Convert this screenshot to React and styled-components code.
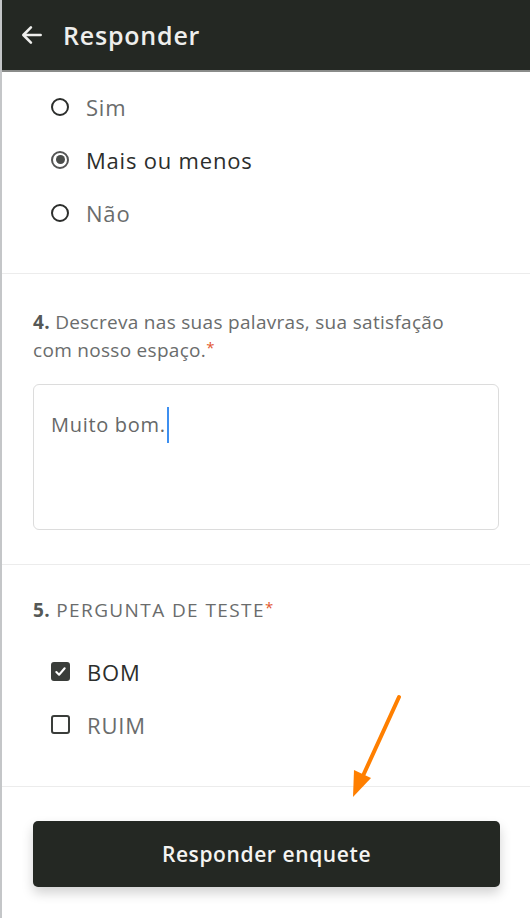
import React, { useState } from "react";
import styled, { createGlobalStyle } from "styled-components";

const GlobalStyle = createGlobalStyle`
  html, body {
    margin: 0;
    padding: 0;
    background: #fff;
  }
  body {
    font-family: "Open Sans", Lato, sans-serif;
    -webkit-font-smoothing: antialiased;
  }
`;

const Page = styled.div`
  position: relative;
  width: 530px;
  height: 918px;
  overflow: hidden;
  border-left: 2px solid #c4c6c8;
  box-sizing: border-box;
  background: #fff;
`;

const Header = styled.header`
  height: 72px;
  background: #242823;
  border-bottom: 2px solid #8a8c8a;
  display: flex;
  align-items: center;
  padding-left: 17px;
  gap: 18px;
  box-sizing: border-box;
`;

const Title = styled.h1`
  margin: 0;
  color: #eeeeec;
  font-size: 25px;
  font-weight: 600;
  letter-spacing: 0.8px;
`;

const Section = styled.section`
  padding: ${(p) => p.$pad || "0 31px"};
  border-bottom: 1px solid #ececec;
`;

const OptionList = styled.div`
  display: flex;
  flex-direction: column;
  margin-top: ${(p) => p.$top || "0"};
`;

const Option = styled.label`
  display: flex;
  align-items: center;
  gap: 17px;
  height: 53px;
  padding-left: 18px;
  font-size: 22px;
  letter-spacing: 0.8px;
  color: ${(p) => (p.$active ? "#2c2e2c" : "#6a6c6c")};
  cursor: pointer;
`;

const Radio = styled.span`
  width: 18px;
  height: 18px;
  border-radius: 50%;
  border: 2px solid ${(p) => (p.$on ? "#555" : "#2c2e2c")};
  box-sizing: border-box;
  display: flex;
  align-items: center;
  justify-content: center;
  flex-shrink: 0;
  &::after {
    content: "";
    display: ${(p) => (p.$on ? "block" : "none")};
    width: 9px;
    height: 9px;
    border-radius: 50%;
    background: #4a4c4a;
  }
`;

const Check = styled.span`
  width: 19px;
  height: 19px;
  border-radius: 3px;
  box-sizing: border-box;
  border: 2px solid #3a3d3a;
  background: ${(p) => (p.$on ? "#3a3d3a" : "#fff")};
  display: flex;
  align-items: center;
  justify-content: center;
  flex-shrink: 0;
`;

const Question = styled.p`
  margin: 0;
  max-width: 440px;
  font-size: 19px;
  line-height: 28px;
  letter-spacing: ${(p) => (p.$caps ? "1.4px" : "0.3px")};
  color: #6a6c6c;
  b {
    color: #555856;
    font-weight: 700;
    letter-spacing: 0.3px;
  }
`;

const Req = styled.span`
  color: #e2572f;
  font-size: 15px;
  vertical-align: top;
  line-height: 22px;
  letter-spacing: 0;
`;

const TextBox = styled.div`
  margin-top: 20px;
  height: 146px;
  border: 1px solid #dcdcdc;
  border-radius: 6px;
  box-sizing: border-box;
  padding: 26px 17px;
  font-size: 20px;
  letter-spacing: 0.7px;
  color: #666868;
  display: flex;
  align-items: flex-start;
`;

const Caret = styled.span`
  display: inline-block;
  width: 2px;
  height: 36px;
  margin-top: -4px;
  margin-left: 1px;
  background: #3d8ff0;
`;

const Footer = styled.div`
  padding: 34px 30px 0 31px;
`;

const SubmitButton = styled.button`
  width: 467px;
  height: 66px;
  border: none;
  border-radius: 5px;
  background: #242823;
  color: #f4f4f2;
  font-family: inherit;
  font-size: 21px;
  font-weight: 600;
  letter-spacing: 0.6px;
  box-shadow: 0 6px 12px rgba(0, 0, 0, 0.18);
  cursor: pointer;
`;

const Annotation = styled.svg`
  position: absolute;
  left: 340px;
  top: 690px;
  pointer-events: none;
`;

const BackArrow = () => (
  <svg width="26" height="26" viewBox="0 0 24 24" fill="none" stroke="#eeeeec" strokeWidth="2.4" strokeLinecap="round" strokeLinejoin="round">
    <path d="M20 12H5" />
    <path d="M11 5l-7 7 7 7" />
  </svg>
);

const Tick = () => (
  <svg width="13" height="13" viewBox="0 0 14 14" fill="none" stroke="#fff" strokeWidth="2.2" strokeLinecap="round" strokeLinejoin="round">
    <path d="M2.5 7.5l3 3 6-7" />
  </svg>
);

export default function App() {
  const [choice, setChoice] = useState("Mais ou menos");
  const [checks, setChecks] = useState({ BOM: true, RUIM: false });

  return (
    <Page>
      <GlobalStyle />
      <Header>
        <BackArrow />
        <Title>Responder</Title>
      </Header>

      <Section $pad="8px 31px 34px">
        <OptionList>
          {["Sim", "Mais ou menos", "Não"].map((o) => (
            <Option key={o} $active={choice === o} onClick={() => setChoice(o)}>
              <Radio $on={choice === o} />
              {o}
            </Option>
          ))}
        </OptionList>
      </Section>

      <Section $pad="34px 31px 34px">
        <Question>
          <b>4.</b> Descreva nas suas palavras, sua satisfação com nosso espaço.
          <Req>*</Req>
        </Question>
        <TextBox>
          Muito bom.
          <Caret />
        </TextBox>
      </Section>

      <Section $pad="31px 31px 35px">
        <Question $caps>
          <b>5.</b> PERGUNTA DE TESTE<Req>*</Req>
        </Question>
        <OptionList $top="21px">
          {["BOM", "RUIM"].map((o) => (
            <Option
              key={o}
              $active={checks[o]}
              onClick={() => setChecks({ ...checks, [o]: !checks[o] })}
            >
              <Check $on={checks[o]}>{checks[o] && <Tick />}</Check>
              {o}
            </Option>
          ))}
        </OptionList>
      </Section>

      <Footer>
        <SubmitButton>Responder enquete</SubmitButton>
      </Footer>

      <Annotation width="70" height="120" viewBox="0 0 70 120">
        <path d="M57 7 L20 88" stroke="#ff7f00" strokeWidth="4" strokeLinecap="round" fill="none" />
        <path d="M11 107 L12 80 L29 88 Z" fill="#ff7f00" />
      </Annotation>
    </Page>
  );
}
